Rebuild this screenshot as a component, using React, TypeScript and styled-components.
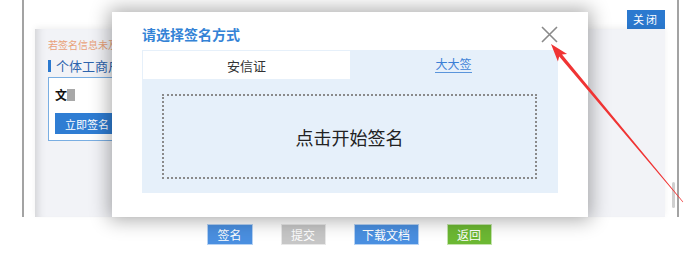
import styled, { createGlobalStyle } from "styled-components";

const GlobalStyle = createGlobalStyle`
  html, body { margin: 0; padding: 0; background: #fff; }
  body { font-family: "Noto Sans CJK SC", "Noto Sans", sans-serif; }
`;

// ── Page frame ────────────────────────────────────────────────────────────────

const Page = styled.div`
  position: relative;
  width: 698px;
  height: 256px;
  overflow: hidden;
  background: #fff;
`;

const Frame = styled.div`
  margin-left: 22px;
  width: 653px;
  height: 217px;
  border-left: 2px solid #a3a3a3;
  border-right: 2px solid #a3a3a3;
  display: flex;
  flex-direction: column;
`;

const TopBar = styled.div`
  height: 29px;
  display: flex;
  justify-content: flex-end;
  align-items: flex-end;
  padding-right: 12px;
  box-sizing: border-box;
`;

const CloseTextBtn = styled.button`
  height: 19px;
  width: 38px;
  padding: 0;
  border: none;
  background: #2b79cf;
  color: #fff;
  font-family: inherit;
  font-size: 11px;
  letter-spacing: 2px;
  line-height: 19px;
`;

const FrameBody = styled.div`
  flex: 1;
  display: flex;
`;

const Panel = styled.div`
  flex: 1;
  margin-left: 11px;
  background: #f2f3f7;
  box-shadow: inset 10px 0 10px -8px rgba(0, 0, 0, 0.16), 0 -2px 6px rgba(0, 0, 0, 0.06);
  padding: 10px 0 0 13px;
  box-sizing: border-box;
`;

// the part of the panel that the dialog leaves visible
const PanelColumn = styled.div`
  width: 64px;
  overflow: hidden;
`;

const ScrollTrack = styled.div`
  width: 12px;
  display: flex;
  flex-direction: column;
  justify-content: flex-end;
  padding-bottom: 9px;
  box-sizing: border-box;
`;

const ScrollThumb = styled.div`
  margin-left: 7px;
  width: 3px;
  height: 26px;
  border-radius: 2px;
  background: #d0d0d0;
`;

const Notice = styled.div`
  font-size: 10px;
  line-height: 12px;
  color: #e9a27a;
  white-space: nowrap;
`;

const SectionHead = styled.div`
  margin-top: 8px;
  display: flex;
  align-items: center;
  gap: 5px;
  font-size: 13px;
  line-height: 14px;
  color: #2d64ad;
  white-space: nowrap;
  &::before {
    content: "";
    flex: none;
    width: 3px;
    height: 12px;
    background: #2b79cf;
  }
`;

const InfoBox = styled.div`
  margin-top: 4px;
  width: 260px;
  height: 64px;
  border: 1px solid #7aaee2;
  background: #fff;
  box-sizing: border-box;
  padding: 9px 0 0 6px;
`;

const Name = styled.div`
  display: flex;
  align-items: center;
  font-size: 12px;
  font-weight: 700;
  color: #111;
  line-height: 16px;
`;

const Blur = styled.span`
  display: inline-block;
  width: 8px;
  height: 12px;
  background: #a8a8a8;
  filter: blur(0.6px);
`;

const SignNowBtn = styled.button`
  margin-top: 10px;
  width: 64px;
  height: 21px;
  padding: 0;
  border: none;
  background: #2f7dd3;
  color: #fff;
  font-family: inherit;
  font-size: 11px;
`;

// ── Footer buttons ────────────────────────────────────────────────────────────

const Footer = styled.div`
  margin-top: 7px;
  display: flex;
  justify-content: center;
  gap: 28px;
`;

const FootBtn = styled.button<{ $bg: string; $w: number }>`
  width: ${(p) => p.$w}px;
  height: 21px;
  padding: 0;
  border: 1px solid rgba(255, 255, 255, 0.6);
  background: ${(p) => p.$bg};
  color: #fff;
  font-family: inherit;
  font-size: 12px;
  line-height: 19px;
`;

// ── Dialog ────────────────────────────────────────────────────────────────────

const Dialog = styled.div`
  position: absolute;
  left: 112px;
  top: 12px;
  width: 476px;
  height: 205px;
  background: #fff;
  box-shadow: 0 0 18px 3px rgba(0, 0, 0, 0.33);
  padding: 0 30px;
  box-sizing: border-box;
`;

const DialogTitle = styled.div`
  height: 38px;
  display: flex;
  align-items: flex-end;
  padding-bottom: 6px;
  box-sizing: border-box;
  font-size: 14px;
  line-height: 20px;
  font-weight: 700;
  color: #3483d6;
`;

const CloseX = styled.svg`
  position: absolute;
  top: 14px;
  right: 30px;
`;

const TabArea = styled.div`
  background: #e6f0fa;
  padding: 1px;
  height: 143px;
  box-sizing: border-box;
  display: flex;
  flex-direction: column;
`;

const Tabs = styled.div`
  display: flex;
  height: 28px;
`;

const Tab = styled.div<{ $active?: boolean }>`
  flex: 1;
  display: flex;
  align-items: center;
  justify-content: center;
  background: ${(p) => (p.$active ? "#fff" : "transparent")};
  color: ${(p) => (p.$active ? "#333" : "#3b7fd6")};
  font-size: ${(p) => (p.$active ? 13 : 12)}px;
`;

const TabLink = styled.span`
  line-height: 14px;
  padding-bottom: 1px;
  border-bottom: 1px solid #5a95db;
`;

const TabBody = styled.div`
  flex: 1;
  padding: 15px 20px 13px 19px;
  display: flex;
`;

const SignPad = styled.div`
  flex: 1;
  border: 2px dotted #8a8a8a;
  display: flex;
  align-items: center;
  justify-content: center;
  font-size: 18px;
  color: #222;
`;

// ── Annotation ────────────────────────────────────────────────────────────────

const Annotation = styled.svg`
  position: absolute;
  left: 0;
  top: 0;
  pointer-events: none;
`;

export default function App() {
  return (
    <Page>
      <GlobalStyle />
      <Frame>
        <TopBar>
          <CloseTextBtn>关闭</CloseTextBtn>
        </TopBar>
        <FrameBody>
          <Panel>
            <PanelColumn>
              <Notice>若签名信息未及时更新</Notice>
              <SectionHead>个体工商户开业</SectionHead>
              <InfoBox>
                <Name>
                  文<Blur />
                </Name>
                <SignNowBtn>立即签名</SignNowBtn>
              </InfoBox>
            </PanelColumn>
          </Panel>
          <ScrollTrack>
            <ScrollThumb />
          </ScrollTrack>
        </FrameBody>
      </Frame>

      <Footer>
        <FootBtn $bg="#4a8fe0" $w={46}>签名</FootBtn>
        <FootBtn $bg="#c6c6c6" $w={45}>提交</FootBtn>
        <FootBtn $bg="#4a8fe0" $w={65}>下载文档</FootBtn>
        <FootBtn $bg="#6cb833" $w={45}>返回</FootBtn>
      </Footer>

      <Dialog>
        <DialogTitle>请选择签名方式</DialogTitle>
        <CloseX width="17" height="17" viewBox="0 0 17 17">
          <path d="M1 1 L16 16 M16 1 L1 16" stroke="#8a8a8a" strokeWidth="1.6" fill="none" />
        </CloseX>
        <TabArea>
          <Tabs>
            <Tab $active>安信证</Tab>
            <Tab>
              <TabLink>大大签</TabLink>
            </Tab>
          </Tabs>
          <TabBody>
            <SignPad>点击开始签名</SignPad>
          </TabBody>
        </TabArea>
      </Dialog>

      <Annotation width="698" height="256" viewBox="0 0 698 256">
        <polygon
          points="551,44 567.1,53.9 562,54.4 683.2,201.8 682.8,202.2 559.2,56.6 557.9,61.6"
          fill="#f03434"
        />
      </Annotation>
    </Page>
  );
}
